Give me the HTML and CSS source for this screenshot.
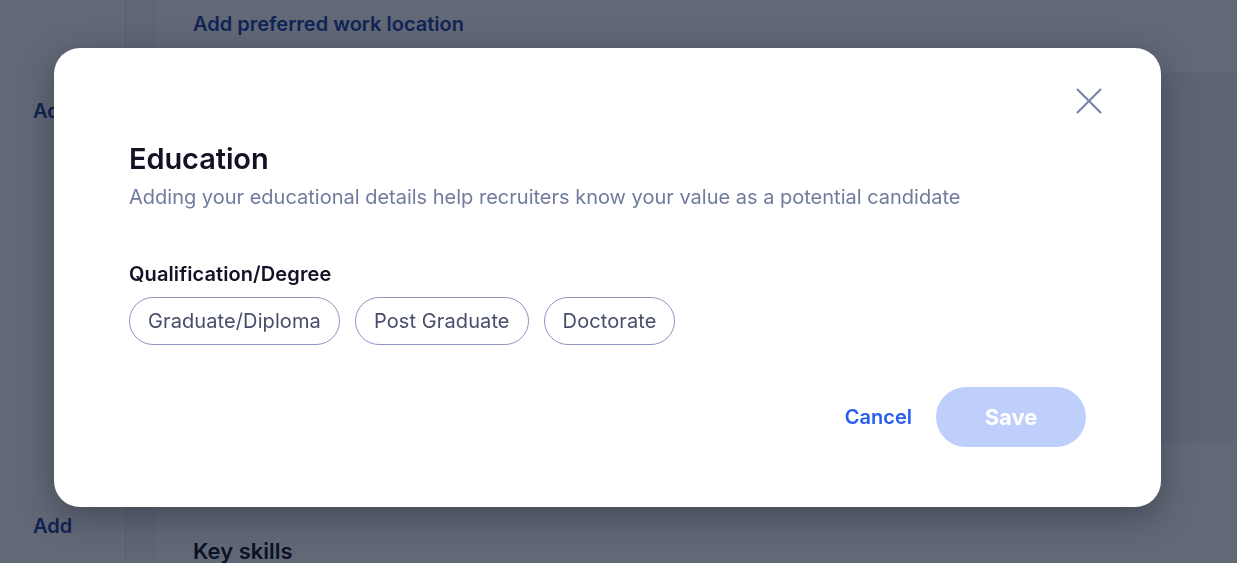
FILE: index.html
```html
<!DOCTYPE html>
<html lang="en">
<head>
<meta charset="utf-8">
<title>Education</title>
<link rel="stylesheet" href="styles.css">
</head>
<body>
<div class="page">
  <aside class="sidebar">
    <a class="side-link side-link--top" href="#">Add</a>
    <a class="side-link side-link--bottom" href="#">Add</a>
  </aside>
  <div class="gutter"></div>
  <main class="content">
    <section class="card card--top">
      <a class="card-link" href="#">Add preferred work location</a>
    </section>
    <section class="card card--middle"></section>
    <section class="card card--skills">
      <h2 class="card-title">Key skills</h2>
    </section>
  </main>
</div>

<div class="overlay">
  <div class="modal" role="dialog" aria-labelledby="modal-title">
    <div class="modal-head">
      <button class="close" aria-label="Close">
        <svg width="26" height="26" viewBox="0 0 26 26" fill="none" stroke="#7480a6" stroke-width="2" stroke-linecap="round">
          <path d="M1.5 1.5 L24.5 24.5 M24.5 1.5 L1.5 24.5"/>
        </svg>
      </button>
    </div>
    <h1 class="modal-title" id="modal-title">Education</h1>
    <p class="modal-sub">Adding your educational details help recruiters know your value as a potential candidate</p>
    <div class="field">
      <div class="field-label">Qualification/Degree</div>
      <div class="chips">
        <button class="chip">Graduate/Diploma</button>
        <button class="chip">Post Graduate</button>
        <button class="chip">Doctorate</button>
      </div>
    </div>
    <div class="actions">
      <button class="btn-cancel">Cancel</button>
      <button class="btn-save" disabled>Save</button>
    </div>
  </div>
</div>
</body>
</html>
```

FILE: styles.css
```css
* { box-sizing: border-box; }

html, body {
  margin: 0;
  padding: 0;
  height: 100%;
  overflow: hidden;
}

body {
  font-family: Inter, "Open Sans", "Liberation Sans", sans-serif;
  background: #f3f4f7;
}

.page {
  display: grid;
  grid-template-columns: 126px 31px 1fr;
  height: 563px;
}

.sidebar {
  background: #ffffff;
  border-right: 1px solid #e6e8ef;
  display: flex;
  flex-direction: column;
  padding: 97px 0 0 33px;
}

.side-link {
  font-size: 20px;
  font-weight: 600;
  color: #1f3a9a;
  text-decoration: none;
  line-height: 28px;
}

.side-link--bottom {
  margin-top: 387px;
}

.gutter {
  background: #f7f8fa;
}

.content {
  display: flex;
  flex-direction: column;
}

.card {
  background: #ffffff;
  padding: 0 36px;
}

.card--top {
  height: 72px;
  padding-top: 10px;
}

.card-link {
  font-size: 20px;
  font-weight: 600;
  color: #2342a8;
  text-decoration: none;
  line-height: 28px;
}

.card--middle {
  height: 370px;
  background: #f3f4f7;
}

.card--skills {
  flex: 1;
  padding-top: 94px;
}

.card-title {
  margin: 0;
  font-size: 22px;
  font-weight: 600;
  color: #121224;
  line-height: 30px;
}

/* overlay + modal */
.overlay {
  position: fixed;
  inset: 0;
  background: rgba(10, 18, 40, 0.64);
  padding: 48px 0 0 54px;
}

.modal {
  width: 1107px;
  height: 459px;
  background: #ffffff;
  border-radius: 26px;
  box-shadow: 0 10px 34px rgba(10, 14, 30, 0.35);
  padding: 40px 60px 0 75px;
  display: flex;
  flex-direction: column;
}

.modal-head {
  display: flex;
  justify-content: flex-end;
  height: 26px;
}

.close {
  border: 0;
  background: none;
  padding: 0;
  margin-right: -1px;
  width: 26px;
  height: 26px;
  cursor: pointer;
}

.close svg { display: block; }

.modal-title {
  margin: 27px 0 0;
  font-size: 29px;
  font-weight: 600;
  color: #121224;
  line-height: 36px;
  letter-spacing: -0.1px;
}

.modal-sub {
  margin: 6px 0 0;
  font-size: 20px;
  font-weight: 400;
  color: #717b9e;
  line-height: 28px;
}

.field {
  margin-top: 51px;
}

.field-label {
  font-size: 20px;
  font-weight: 600;
  color: #121224;
  line-height: 24px;
  letter-spacing: 0.1px;
}

.chips {
  display: flex;
  gap: 15px;
  margin-top: 11px;
}

.chip {
  height: 48px;
  padding: 0 18px;
  border: 1px solid #8d95c2;
  border-radius: 24px;
  background: #ffffff;
  font-family: inherit;
  font-size: 20px;
  letter-spacing: 0.1px;
  color: #474d6a;
  cursor: pointer;
}

.actions {
  display: flex;
  justify-content: flex-end;
  align-items: center;
  gap: 24px;
  margin-top: 42px;
  margin-right: 15px;
}

.btn-cancel {
  border: 0;
  background: none;
  padding: 0;
  font-family: inherit;
  font-size: 20px;
  font-weight: 600;
  color: #275df5;
  cursor: pointer;
}

.btn-save {
  width: 150px;
  height: 60px;
  border: 0;
  border-radius: 30px;
  background: #bfcffb;
  font-family: inherit;
  font-size: 22px;
  font-weight: 700;
  color: #ffffff;
}
```
